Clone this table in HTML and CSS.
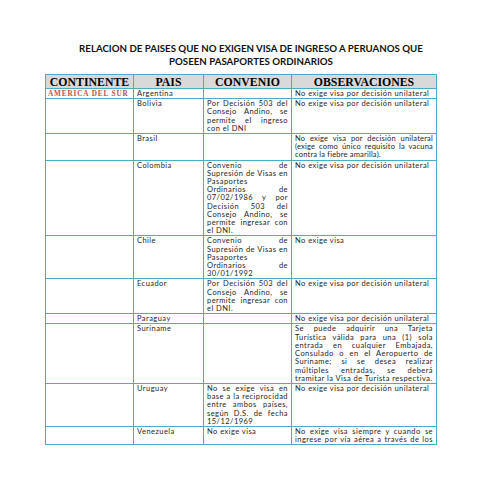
FILE: index.html
```html
<!DOCTYPE html>
<html lang="es">
<head>
<meta charset="utf-8">
<title>Relación de países</title>
<link rel="stylesheet" href="styles.css">
</head>
<body>
<div class="page">
  <h1 class="title">RELACION DE PAISES QUE NO EXIGEN VISA DE INGRESO A PERUANOS QUE<br>POSEEN PASAPORTES ORDINARIOS</h1>
  <table class="visa-table">
    <colgroup>
      <col class="c-cont"><col class="c-pais"><col class="c-conv"><col class="c-obs">
    </colgroup>
    <thead>
      <tr><th>CONTINENTE</th><th>PAIS</th><th>CONVENIO</th><th>OBSERVACIONES</th></tr>
    </thead>
    <tbody>
      <tr><td class="continent">AMERICA DEL SUR</td><td>Argentina</td><td></td><td>No exige visa por decisión unilateral</td></tr>
      <tr><td></td><td>Bolivia</td><td class="just">Por Decisión 503 del Consejo Andino, se permite el ingreso con el DNI</td><td>No exige visa por decisión unilateral</td></tr>
      <tr><td></td><td>Brasil</td><td></td><td class="just tight">No exige visa por decisión unilateral (exige como único requisito la vacuna contra la fiebre amarilla).</td></tr>
      <tr><td></td><td>Colombia</td><td class="just">Convenio de Supresión de Visas en Pasaportes Ordinarios de 07/02/1986 y por Decisión 503 del Consejo Andino, se permite ingresar con el DNI.</td><td>No exige visa por decisión unilateral</td></tr>
      <tr><td></td><td>Chile</td><td class="just">Convenio de Supresión de Visas en Pasaportes Ordinarios de 30/01/1992</td><td>No exige visa</td></tr>
      <tr><td></td><td>Ecuador</td><td class="just">Por Decisión 503 del Consejo Andino, se permite ingresar con el DNI.</td><td>No exige visa por decisión unilateral</td></tr>
      <tr><td></td><td>Paraguay</td><td></td><td>No exige visa por decisión unilateral</td></tr>
      <tr><td></td><td>Suriname</td><td></td><td class="just">Se puede adquirir una Tarjeta Turística válida para una (1) sola entrada en cualquier Embajada, Consulado o en el Aeropuerto de Suriname; si se desea realizar múltiples entradas, se deberá tramitar la Visa de Turista respectiva.</td></tr>
      <tr><td></td><td>Uruguay</td><td class="just">No se exige visa en base a la reciprocidad entre ambos países, según D.S. de fecha 15/12/1969</td><td>No exige visa por decisión unilateral</td></tr>
      <tr><td></td><td>Venezuela</td><td>No exige visa</td><td class="just cut">No exige visa siempre y cuando se ingrese por vía aérea a través de los</td></tr>
    </tbody>
  </table>
</div>
</body>
</html>
```
FILE: styles.css
```css
html, body {
  margin: 0;
  padding: 0;
  background: #ffffff;
}
body {
  font-family: Lato, "Liberation Sans", sans-serif;
  color: #1e1e1e;
}
.page {
  padding-top: 42px;
}
.title {
  margin: 0 0 6px 0;
  padding-left: 7px;
  text-align: center;
  font-family: Lato, "Liberation Sans", sans-serif;
  font-weight: 700;
  font-size: 9.7px;
  line-height: 13px;
  color: #111;
}
.visa-table {
  margin-left: 45px;
  width: 391px;
  table-layout: fixed;
  border-collapse: collapse;
}
.c-cont { width: 88px; }
.c-pais { width: 70px; }
.c-conv { width: 88px; }
.c-obs { width: 145px; }
.visa-table th {
  height: 13px;
  padding: 0;
  background: #d9d9d9;
  border: 1px solid #4bacc6;
  font-family: "Liberation Serif", serif;
  font-weight: 700;
  font-size: 11.8px;
  line-height: 12px;
  color: #000;
  text-align: center;
}
.visa-table td {
  padding: 1px 3px 0 3px;
  border: 1px solid #4bacc6;
  vertical-align: top;
  font-size: 7.5px;
  letter-spacing: 0.45px;
  line-height: 8.2px;
  text-align: left;
}
.visa-table td.just {
  text-align: justify;
}
.visa-table td.tight {
  letter-spacing: 0.2px;
}
.visa-table td.cut {
  text-align-last: justify;
}
.visa-table td.continent {
  padding-left: 2px;
  font-family: "Liberation Serif", serif;
  font-weight: 700;
  font-size: 7.2px;
  letter-spacing: 0.9px;
  color: #c0504d;
}
```
